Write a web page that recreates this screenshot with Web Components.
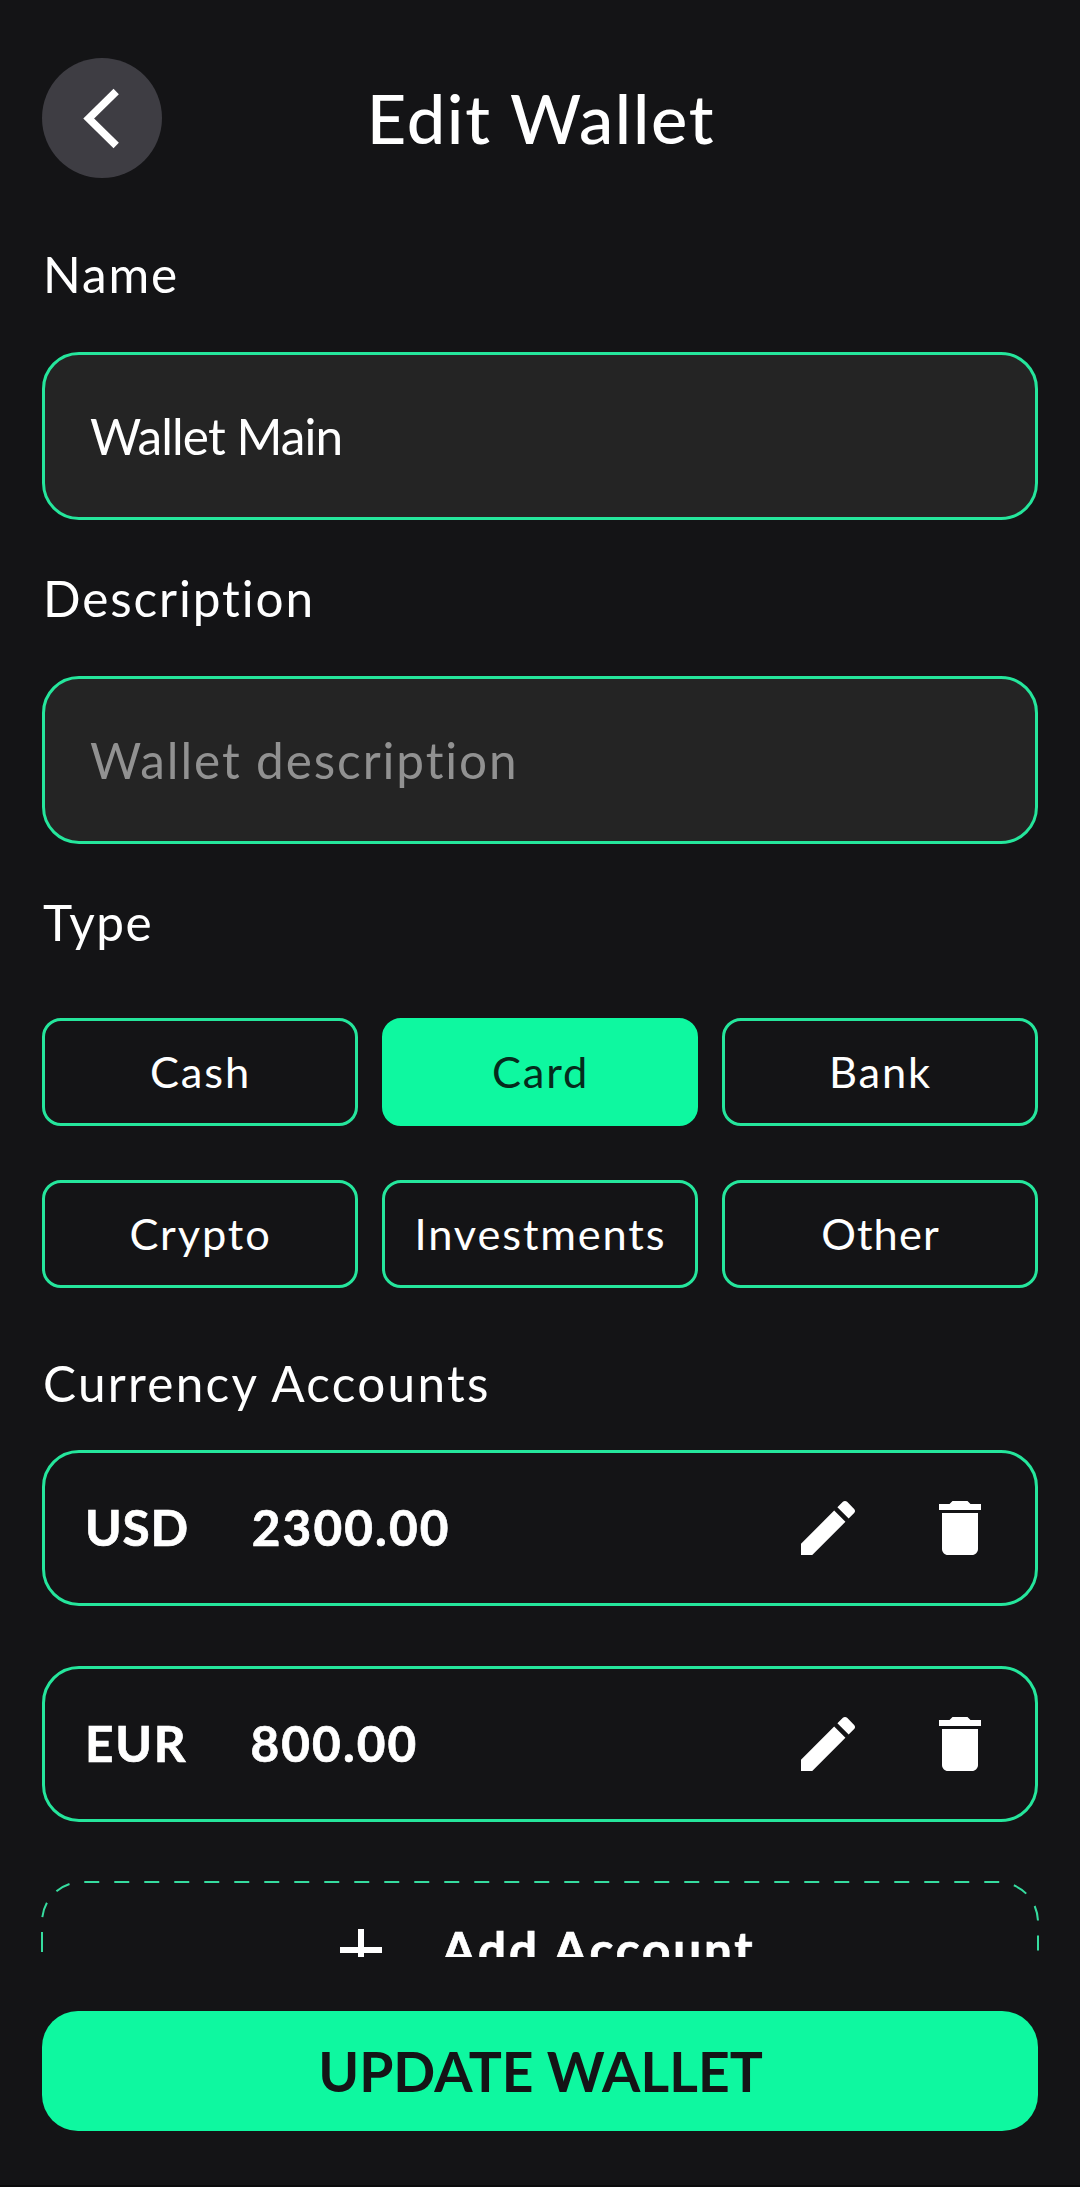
<!DOCTYPE html>
<html lang="en">
<head>
<meta charset="utf-8">
<title>Edit Wallet</title>
<style>
  html, body { margin: 0; background: #141416; }
  body { font-family: Lato, "Noto Sans", sans-serif; color: #fff; --accent: #0ef8a0; --line: #25e69c; --ink: #141416; --field: #242424; }
</style>
</head>
<body>
<script>
  const define = (name, html) => {
    const template = document.createElement('template');
    template.innerHTML = html;
    customElements.define(name, class extends HTMLElement {
      constructor() {
        super();
        this.attachShadow({ mode: 'open' }).append(template.content.cloneNode(true));
      }
    });
  };

  define('wallet-screen', `
    <style>
      :host { display: flex; flex-direction: column; box-sizing: border-box; width: 1080px; height: 2187px; padding: 58px 42px 0; border-bottom: 2px solid #0b0b0c; background: var(--ink); overflow: hidden; }
      main { height: 1779px; flex: none; overflow: hidden; display: flex; flex-direction: column; margin: 0 -4px; padding: 0 4px; }
      footer { padding-top: 54px; }
    </style>
    <slot name="header"></slot>
    <main><slot></slot></main>
    <footer><slot name="footer"></slot></footer>`);

  define('screen-header', `
    <style>
      :host { display: grid; grid-template-columns: 120px 1fr 120px; height: 120px; flex: none; align-items: center; }
      button { all: unset; display: block; width: 120px; height: 120px; border-radius: 50%; background: #3e3d43; }
      svg { display: block; }
      h1 { margin: 0; padding: 0 0 1px 2px; text-align: center; font-size: 68.5px; line-height: 84px; font-weight: 500; letter-spacing: 1.7px; }
    </style>
    <button aria-label="Back"><svg width="120" height="120" viewBox="0 0 120 120"><path d="M74.2 33.5 46.7 60.5 74.2 87.5" fill="none" stroke="#fff" stroke-width="7.6"/></svg></button>
    <h1><slot></slot></h1>`);

  define('form-label', `
    <style>
      :host { display: block; flex: none; box-sizing: border-box; height: 60px; padding: 1px 0 0 1px; font-size: 49.5px; line-height: 60px; letter-spacing: 1.9px; white-space: nowrap; }
    </style><slot></slot>`);

  define('text-field', `
    <style>
      :host { display: flex; flex: none; align-items: center; box-sizing: border-box; height: 168px; padding: 0 45px; border: 3px solid var(--line); border-radius: 37px; background: var(--field); font-size: 49.5px; line-height: 60px; white-space: nowrap; letter-spacing: -.9px; }
      :host([placeholder]) { padding-bottom: 1px; color: #919191; letter-spacing: 1.9px; }
    </style><slot></slot>`);

  define('type-grid', `
    <style>
      :host { display: grid; flex: none; grid-template-columns: repeat(3, 1fr); gap: 54px 24px; }
    </style><slot></slot>`);

  define('type-chip', `
    <style>
      :host { display: flex; align-items: center; justify-content: center; box-sizing: border-box; height: 108px; padding: 0 0 2px 1px; border: 3px solid var(--line); border-radius: 19px; font-size: 43.4px; line-height: 54px; letter-spacing: 1.85px; white-space: nowrap; }
      :host([selected]) { background: var(--accent); border-color: var(--accent); color: #052b1c; }
    </style><span><slot></slot></span>`);

  define('icon-glyph', `
    <style>
      :host { display: block; width: 72px; height: 72px; flex: none; }
      svg { display: block; width: 72px; height: 72px; fill: #fff; stroke: none; }
      path { display: none; }
      :host([name="edit"]) .edit, :host([name="trash"]) .trash, :host([name="plus"]) .plus { display: block; }
    </style>
    <svg viewBox="0 0 24 24">
      <path class="edit" d="M3 17.25V21h3.75L17.81 9.94l-3.75-3.75L3 17.25zM20.71 7.04c.39-.39.39-1.02 0-1.41l-2.34-2.34c-.39-.39-1.02-.39-1.41 0l-1.83 1.83 3.75 3.75 1.83-1.83z"/>
      <path class="trash" d="M6 19c0 1.1.9 2 2 2h8c1.1 0 2-.9 2-2V7H6v12zM19 4h-3.5l-1-1h-5l-1 1H5v2h14V4z"/>
      <path class="plus" d="M19 13h-6v6h-2v-6H5v-2h6V5h2v6h6v2z"/>
    </svg>`);

  define('account-row', `
    <style>
      :host { display: flex; flex: none; align-items: center; box-sizing: border-box; height: 156px; padding: 0 39px 0 40px; border: 3px solid var(--line); border-radius: 37px; font-size: 49.5px; line-height: 60px; font-weight: 700; letter-spacing: 2.1px; -webkit-text-stroke: .7px #fff; }
      .code, .amount { padding-bottom: 2px; }
      .code { margin-right: 63px; letter-spacing: 1.8px; }
      .amount { flex: 1; }
      .actions { display: flex; gap: 60px; }
    </style>
    <span class="code"><slot name="code"></slot></span>
    <span class="amount"><slot></slot></span>
    <span class="actions"><icon-glyph name="edit"></icon-glyph><icon-glyph name="trash"></icon-glyph></span>`);

  define('add-account', `
    <style>
      :host { display: grid; flex: none; width: 996px; height: 136px; }
      svg, div { grid-area: 1 / 1; }
      svg { display: block; width: 996px; height: 136px; overflow: visible; }
      div { display: flex; align-items: center; justify-content: center; gap: 44px; padding-left: 1px; font-size: 49.5px; line-height: 60px; font-weight: 700; letter-spacing: 2.8px; white-space: nowrap; -webkit-text-stroke: .7px #fff; }
      span { padding-bottom: 3px; }
    </style>
    <svg viewBox="0 0 996 136"><path d="M0 65V40A40 40 0 0 1 40 0H956A40 40 0 0 1 996 40V96A40 40 0 0 1 956 136H40A40 40 0 0 1 0 96Z" fill="none" stroke="#36dc9f" stroke-width="2" stroke-dasharray="15 15"/></svg>
    <div><icon-glyph name="plus"></icon-glyph><span><slot></slot></span></div>`);

  define('primary-button', `
    <style>
      :host { display: block; }
      button { all: unset; box-sizing: border-box; display: block; width: 100%; height: 120px; padding-left: 1px; border-radius: 36px; background: var(--accent); color: var(--ink); text-align: center; font-size: 55.2px; line-height: 117px; font-weight: 700; letter-spacing: .05px; white-space: nowrap; }
    </style><button><slot></slot></button>`);
</script>

<wallet-screen>
  <screen-header slot="header">Edit Wallet</screen-header>

  <form-label style="margin-top:65px">Name</form-label>
  <text-field style="margin-top:49px">Wallet Main</text-field>

  <form-label style="margin-top:47px">Description</form-label>
  <text-field placeholder style="margin-top:49px">Wallet description</text-field>

  <form-label style="margin-top:47px;letter-spacing:1.4px">Type</form-label>
  <type-grid style="margin-top:67px">
    <type-chip>Cash</type-chip>
    <type-chip selected>Card</type-chip>
    <type-chip>Bank</type-chip>
    <type-chip>Crypto</type-chip>
    <type-chip>Investments</type-chip>
    <type-chip style="letter-spacing:1.1px">Other</type-chip>
  </type-grid>

  <form-label style="margin-top:64px;letter-spacing:2.25px">Currency Accounts</form-label>
  <account-row style="margin-top:38px"><span slot="code" style="letter-spacing:.74px">USD</span>2300.00</account-row>
  <account-row style="margin-top:60px"><span slot="code">EUR</span>800.00</account-row>
  <add-account style="margin-top:60px">Add Account</add-account>

  <primary-button slot="footer">UPDATE WALLET</primary-button>
</wallet-screen>
</body>
</html>
